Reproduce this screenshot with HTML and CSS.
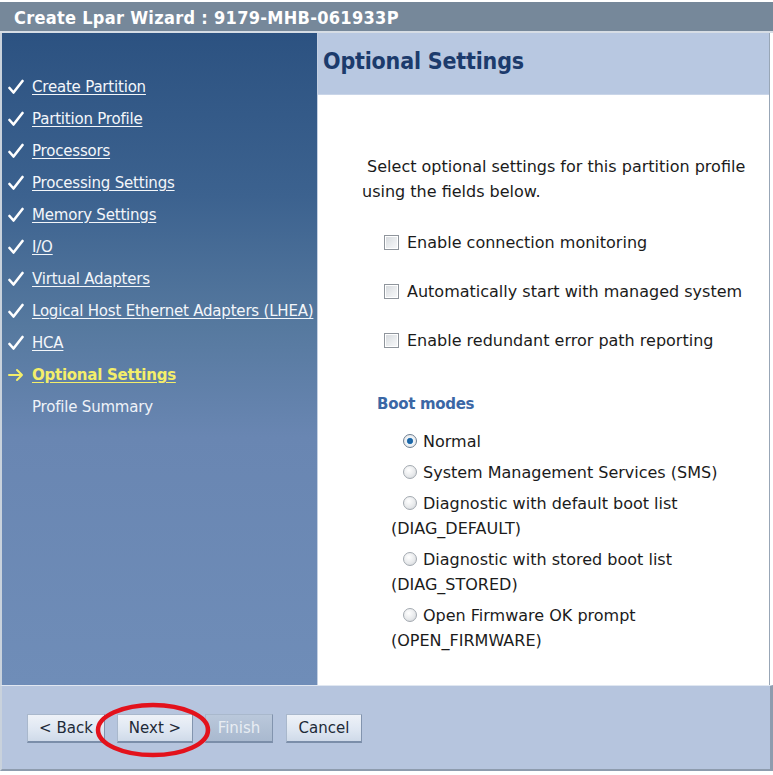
FILE: index.html
```html
<!DOCTYPE html>
<html>
<head>
<meta charset="utf-8">
<title>Create Lpar Wizard</title>
<link rel="stylesheet" href="styles.css">
</head>
<body>
<div class="window">
  <div class="titlebar">Create Lpar Wizard : 9179-MHB-061933P</div>
  <div class="main">
    <nav class="nav">
      <ul class="steps">
        <li class="step done"><svg class="mark" viewBox="0 0 16 16"><path d="M1.5 9 L5.5 13.5 L14.5 2" fill="none" stroke="#fff" stroke-width="2.6" stroke-linecap="round" stroke-linejoin="round"/></svg><a href="#">Create Partition</a></li>
        <li class="step done"><svg class="mark" viewBox="0 0 16 16"><path d="M1.5 9 L5.5 13.5 L14.5 2" fill="none" stroke="#fff" stroke-width="2.6" stroke-linecap="round" stroke-linejoin="round"/></svg><a href="#">Partition Profile</a></li>
        <li class="step done"><svg class="mark" viewBox="0 0 16 16"><path d="M1.5 9 L5.5 13.5 L14.5 2" fill="none" stroke="#fff" stroke-width="2.6" stroke-linecap="round" stroke-linejoin="round"/></svg><a href="#">Processors</a></li>
        <li class="step done"><svg class="mark" viewBox="0 0 16 16"><path d="M1.5 9 L5.5 13.5 L14.5 2" fill="none" stroke="#fff" stroke-width="2.6" stroke-linecap="round" stroke-linejoin="round"/></svg><a href="#">Processing Settings</a></li>
        <li class="step done"><svg class="mark" viewBox="0 0 16 16"><path d="M1.5 9 L5.5 13.5 L14.5 2" fill="none" stroke="#fff" stroke-width="2.6" stroke-linecap="round" stroke-linejoin="round"/></svg><a href="#">Memory Settings</a></li>
        <li class="step done"><svg class="mark" viewBox="0 0 16 16"><path d="M1.5 9 L5.5 13.5 L14.5 2" fill="none" stroke="#fff" stroke-width="2.6" stroke-linecap="round" stroke-linejoin="round"/></svg><a href="#">I/O</a></li>
        <li class="step done"><svg class="mark" viewBox="0 0 16 16"><path d="M1.5 9 L5.5 13.5 L14.5 2" fill="none" stroke="#fff" stroke-width="2.6" stroke-linecap="round" stroke-linejoin="round"/></svg><a href="#">Virtual Adapters</a></li>
        <li class="step done"><svg class="mark" viewBox="0 0 16 16"><path d="M1.5 9 L5.5 13.5 L14.5 2" fill="none" stroke="#fff" stroke-width="2.6" stroke-linecap="round" stroke-linejoin="round"/></svg><a href="#">Logical Host Ethernet Adapters (LHEA)</a></li>
        <li class="step done"><svg class="mark" viewBox="0 0 16 16"><path d="M1.5 9 L5.5 13.5 L14.5 2" fill="none" stroke="#fff" stroke-width="2.6" stroke-linecap="round" stroke-linejoin="round"/></svg><a href="#">HCA</a></li>
        <li class="step current"><svg class="mark" viewBox="0 0 16 16"><path d="M1 8 H14 M9 3 L14 8 L9 13" fill="none" stroke="#f4ee6a" stroke-width="2" stroke-linecap="round" stroke-linejoin="round"/></svg><a href="#">Optional Settings</a></li>
        <li class="step todo"><span class="mark"></span><span>Profile Summary</span></li>
      </ul>
    </nav>
    <section class="panel">
      <h1 class="panel-title">Optional Settings</h1>
      <div class="panel-body">
        <p class="intro">&nbsp;Select optional settings for this partition profile using the fields below.</p>
        <div class="checks">
          <label class="check"><span class="box"></span>Enable connection monitoring</label>
          <label class="check"><span class="box"></span>Automatically start with managed system</label>
          <label class="check"><span class="box"></span>Enable redundant error path reporting</label>
        </div>
        <h2 class="group-title">Boot modes</h2>
        <div class="radios">
          <div class="radio"><span class="dot on"></span>Normal</div>
          <div class="radio"><span class="dot"></span>System Management Services (SMS)</div>
          <div class="radio"><span class="dot"></span>Diagnostic with default boot list (DIAG_DEFAULT)</div>
          <div class="radio"><span class="dot"></span>Diagnostic with stored boot list (DIAG_STORED)</div>
          <div class="radio"><span class="dot"></span>Open Firmware OK prompt (OPEN_FIRMWARE)</div>
        </div>
      </div>
    </section>
  </div>
  <div class="footer">
    <div class="buttons">
      <button class="btn btn-back">&lt; Back</button>
      <button class="btn btn-next">Next &gt;</button>
      <button class="btn btn-finish" disabled>Finish</button>
      <button class="btn btn-cancel">Cancel</button>
    </div>
    <svg class="highlight" viewBox="0 0 116 56"><ellipse cx="58" cy="28" rx="55" ry="25" fill="none" stroke="#e3121c" stroke-width="4.5"/></svg>
  </div>
</div>
</body>
</html>
```

FILE: styles.css
```css
* { box-sizing: border-box; }
html, body { margin: 0; padding: 0; background: #ffffff; }
body { font-family: "DejaVu Sans", Verdana, sans-serif; color: #1b1b1b; }

.window {
  width: 773px;
  height: 775px;
  padding-top: 2px;
  background: #ffffff;
}

.titlebar {
  height: 31px;
  background: #76889a;
  color: #ffffff;
  font-family: "DejaVu Sans Condensed", "DejaVu Sans", sans-serif;
  font-stretch: condensed;
  font-weight: bold;
  font-size: 18px;
  line-height: 31px;
  padding-left: 14px;
  letter-spacing: 0.3px;
  border-bottom: 2px solid #d6dde5;
}

.main {
  display: flex;
  height: 652px;
  border-left: 2px solid #c9d2dc;
  border-right: 3px solid #ffffff;
}

.nav {
  width: 316px;
  flex: none;
  background: linear-gradient(180deg, #2c5281 0%, #3c628f 25%, #56799f 45%, #6986b2 62%, #6f8db8 100%);
  border-right: 1px solid #c4d0e2;
  padding-top: 38px;
}

.steps { list-style: none; margin: 0; padding: 0; }
.step {
  display: flex;
  align-items: center;
  height: 32px;
  font-size: 15px;
  letter-spacing: -0.2px;
  white-space: nowrap;
}
.mark { width: 16px; height: 16px; margin-left: 6px; margin-right: 8px; flex: none; }
.step a { color: #f3f6fa; text-decoration: underline; text-underline-offset: 2px; }
.step.current a { color: #f4ee6a; font-weight: bold; letter-spacing: -0.25px; }
.step.todo span { color: #eef2f8; }

.panel {
  flex: 1;
  display: flex;
  flex-direction: column;
  border-right: 1px solid #98a6b6;
}
.panel-title {
  margin: 0;
  height: 62px;
  background: #b8c8e1;
  color: #1c3b6c;
  font-family: "DejaVu Sans Condensed", "DejaVu Sans", sans-serif;
  font-stretch: condensed;
  font-size: 23px;
  font-weight: bold;
  padding: 15px 0 0 5px;
  letter-spacing: -0.2px;
  border-bottom: 1px solid #c9d5e8;
}
.panel-body { flex: 1; padding-left: 44px; padding-top: 59px; }

.intro {
  margin: 0;
  font-size: 16px;
  line-height: 25px;
  width: 405px;
}

.checks { margin-top: 26px; padding-left: 22px; display: flex; flex-direction: column; gap: 24px; }
.check { display: flex; align-items: center; height: 25px; font-size: 16px; }
.box {
  width: 15px; height: 15px; margin-right: 8px; flex: none;
  border: 1px solid #8f959c;
  background: linear-gradient(135deg, #d4d8dc 0%, #eceef0 60%, #f8f9fa 100%);
  box-shadow: inset 0 0 0 1px #ffffff;
}

.group-title {
  margin: 39px 0 0 15px;
  font-size: 15px;
  line-height: 25px;
  font-weight: bold;
  color: #3b67a5;
  letter-spacing: -0.3px;
}

.radios { margin-top: 12px; padding-left: 29px; display: flex; flex-direction: column; gap: 6px; width: 370px; }
.radio { font-size: 16px; line-height: 25px; text-indent: 12px; }
.dot {
  display: inline-block;
  width: 14px; height: 14px;
  margin-right: 6px;
  text-indent: 0;
  vertical-align: -1px;
  border-radius: 50%;
  border: 1px solid #a3a9b0;
  background: radial-gradient(circle at 40% 35%, #ffffff 0%, #e6e8ea 60%, #c9cdd1 100%);
}
.dot.on {
  border-color: #6e7f92;
  background: radial-gradient(circle at 50% 50%, #1f6fb4 0%, #1b5f9c 28%, #5aa0d8 36%, #f2f4f6 42%, #dde1e5 100%);
}

.footer {
  position: relative;
  height: 86px;
  background: #b6c5de;
  border-top: 1px solid #e0e7f1;
  border-left: 2px solid #c9d2dc;
  border-right: 3px solid #8e9cae;
  border-bottom: 2px solid #8e9cae;
  padding: 28px 0 0 25px;
}
.buttons { display: flex; gap: 12px; }
.btn {
  height: 29px;
  font-family: "DejaVu Sans", Verdana, sans-serif;
  font-size: 15px;
  color: #1e2a38;
  background: linear-gradient(180deg, #eef2f8 0%, #dfe7f2 55%, #cfdae9 100%);
  border: 1px solid #a9b8cc;
  border-right-color: #8294ae;
  border-bottom: 2px solid #7b8ea9;
  padding: 0;
}
.btn-back { width: 78px; }
.btn-next { width: 76px; }
.btn-finish { width: 68px; color: #e8edf3; background: linear-gradient(180deg, #bac8db 0%, #a9b9cf 100%); }
.btn-cancel { width: 76px; margin-left: 1px; }

.highlight {
  position: absolute;
  left: 93px;
  top: 16px;
  width: 116px;
  height: 56px;
}
```
